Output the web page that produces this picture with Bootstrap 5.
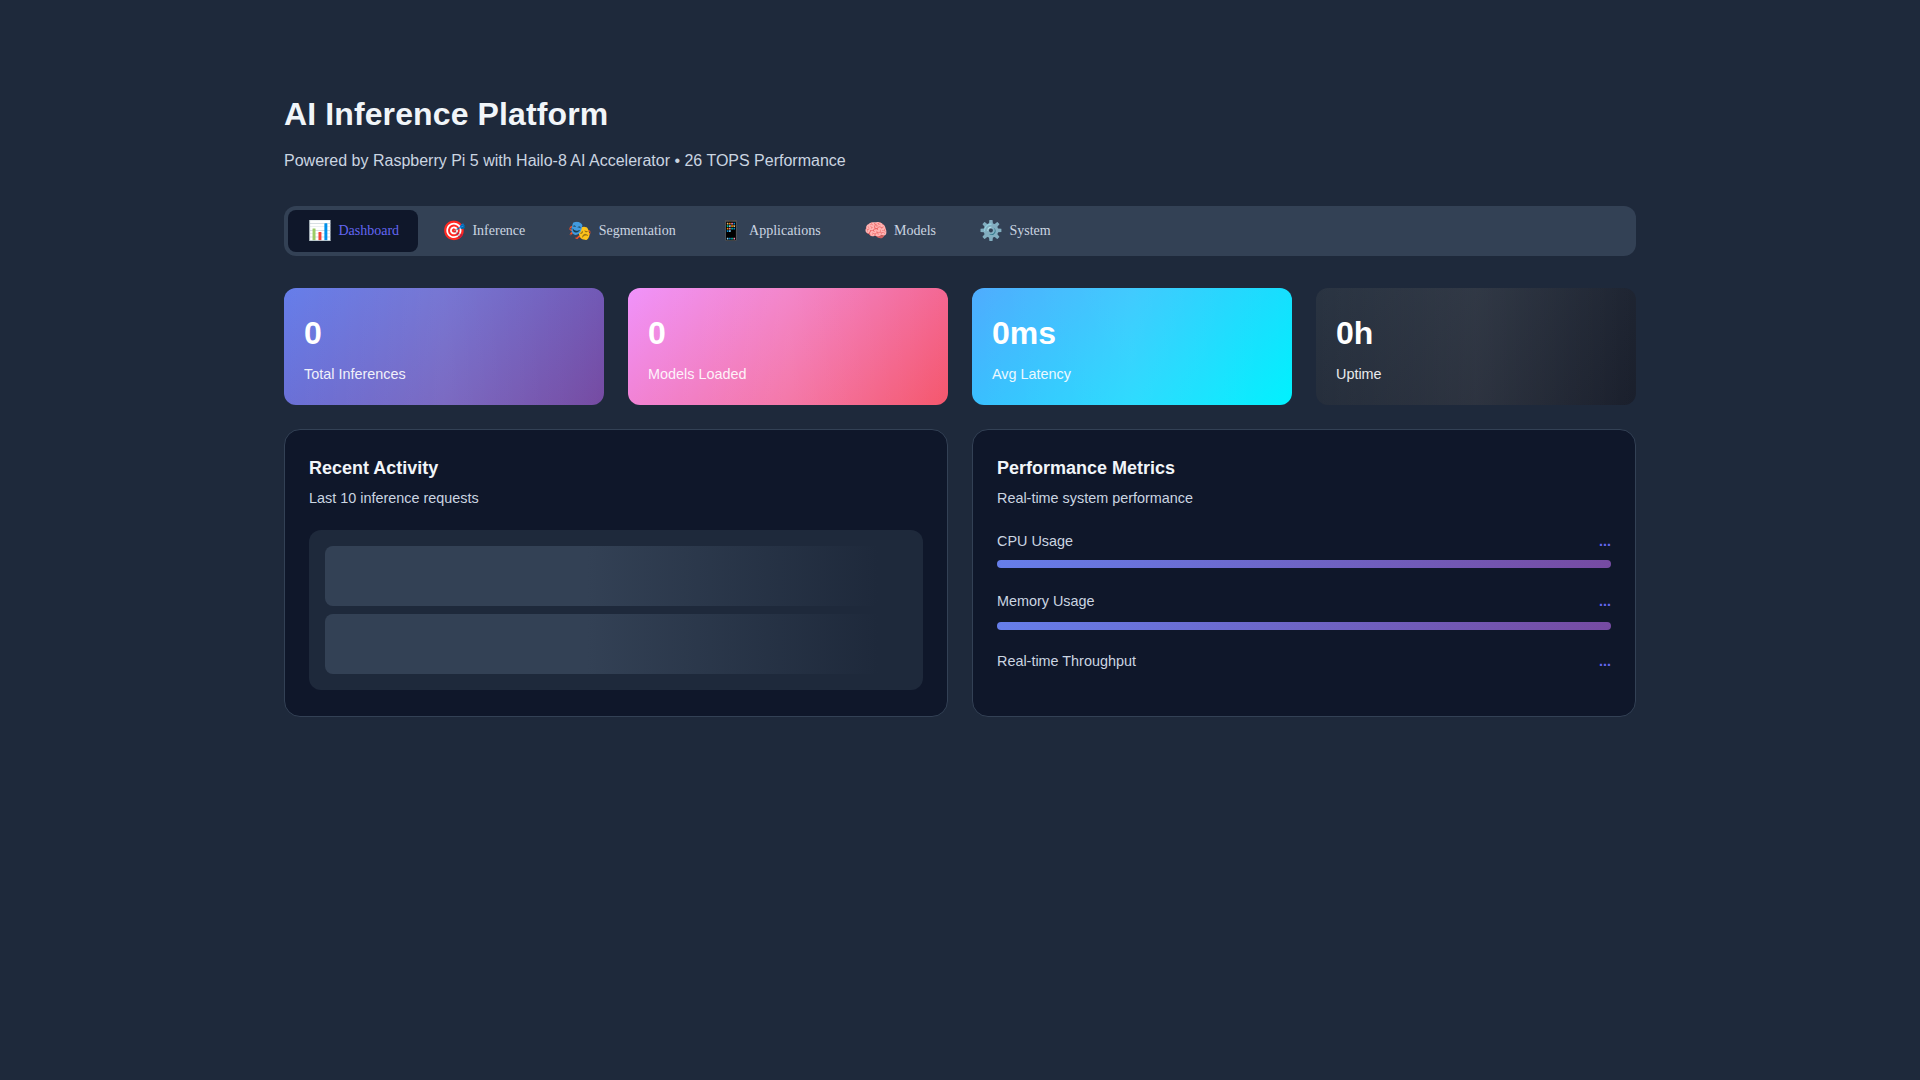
<!DOCTYPE html>
<html lang="en">
<head>
<meta charset="utf-8">
<title>AI Inference Platform</title>
<link href="https://cdn.jsdelivr.net/npm/bootstrap@5.3.0/dist/css/bootstrap.min.css" rel="stylesheet">
<style>
body{background:#1e293b;font-family:"Liberation Sans",Arial,sans-serif;line-height:1.6;color:#f1f5f9;min-height:1080px}
.shell{max-width:1400px;margin:0 auto;padding:89px 24px 24px}
.page-title{font-size:32px;font-weight:700;line-height:1.6;letter-spacing:.12px;color:#f1f5f9;margin:0 0 8px}
.page-sub{font-size:16px;line-height:1.6;color:#cbd5e1;margin:0 0 32px}
.tabbar{background:#334155;border-radius:12px;padding:4px;margin-bottom:32px;height:50px}
.tabbtn{display:flex;align-items:center;gap:6.4px;height:42px;padding:0 19px 0 20px;border:0;background:transparent;border-radius:8px;color:#cbd5e1;font-family:"Liberation Serif",serif;font-size:14px}
.tabbtn.on{background:#0f172a;color:#6366f1}
.tabemoji{font-size:19.2px;line-height:1}
.stats{display:grid;grid-template-columns:repeat(4,1fr);gap:24px;margin-bottom:24px}
.statbox{height:117px;border-radius:12px;padding:20px;color:#fff}
.statval{font-size:32px;font-weight:700;line-height:1.6;margin-bottom:4px}
.statlbl{font-size:14.4px;line-height:1.6;opacity:.9}
.g1{background:linear-gradient(90deg,transparent,rgba(255,255,255,.08),transparent),linear-gradient(135deg,#667eea,#764ba2)}
.g2{background:linear-gradient(90deg,transparent,rgba(255,255,255,.08),transparent),linear-gradient(135deg,#f093fb,#f5576c)}
.g3{background:linear-gradient(90deg,transparent,rgba(255,255,255,.08),transparent),linear-gradient(135deg,#4facfe,#00f2fe)}
.g4{background:linear-gradient(90deg,transparent,rgba(255,255,255,.06),transparent),linear-gradient(135deg,#2a3442,#1a1f2c)}
.panels{display:grid;grid-template-columns:repeat(2,1fr);gap:24px}
.panelbox{background:#0f172a;border:1px solid #334155;border-radius:16px;padding:24px;height:288px}
.ptitle{font-size:18px;font-weight:700;line-height:1.6;color:#f1f5f9;margin:0 0 4px}
.psub{font-size:14.4px;line-height:1.6;color:#cbd5e1;margin:0 0 20px}
.skelwrap{background:#1e293b;border-radius:12px;padding:16px}
.skel{height:60px;border-radius:8px;background:linear-gradient(90deg,#334155 45%,#1e293b 95%);margin-bottom:8px}
.skel:last-child{margin-bottom:0}
.mrow{display:flex;justify-content:space-between;align-items:center;height:23px;font-size:14.4px;color:#cbd5e1}
.mdots{color:#6366f1;font-size:14.4px;font-weight:600;margin-top:1px}
.mbar{height:8px;border-radius:4px;background:linear-gradient(90deg,#667eea,#764ba2)}
.mbar-a{margin:7px 0 22px}
.mbar-b{margin:9px 0 20px}
</style>
</head>
<body>
<div class="shell">
  <h1 class="page-title">AI Inference Platform</h1>
  <p class="page-sub">Powered by Raspberry Pi 5 with Hailo-8 AI Accelerator • 26 TOPS Performance</p>
  <nav class="tabbar d-flex gap-1">
    <button class="tabbtn on"><span class="tabemoji">📊</span>Dashboard</button>
    <button class="tabbtn"><span class="tabemoji">🎯</span>Inference</button>
    <button class="tabbtn"><span class="tabemoji">🎭</span>Segmentation</button>
    <button class="tabbtn"><span class="tabemoji">📱</span>Applications</button>
    <button class="tabbtn"><span class="tabemoji">🧠</span>Models</button>
    <button class="tabbtn"><span class="tabemoji">⚙️</span>System</button>
  </nav>
  <section class="stats">
    <div class="statbox g1"><div class="statval">0</div><div class="statlbl">Total Inferences</div></div>
    <div class="statbox g2"><div class="statval">0</div><div class="statlbl">Models Loaded</div></div>
    <div class="statbox g3"><div class="statval">0ms</div><div class="statlbl">Avg Latency</div></div>
    <div class="statbox g4"><div class="statval">0h</div><div class="statlbl">Uptime</div></div>
  </section>
  <section class="panels">
    <div class="panelbox">
      <h3 class="ptitle">Recent Activity</h3>
      <p class="psub">Last 10 inference requests</p>
      <div class="skelwrap"><div class="skel"></div><div class="skel"></div></div>
    </div>
    <div class="panelbox">
      <h3 class="ptitle">Performance Metrics</h3>
      <p class="psub">Real-time system performance</p>
      <div class="mrow"><span>CPU Usage</span><span class="mdots">...</span></div>
      <div class="mbar mbar-a"></div>
      <div class="mrow"><span>Memory Usage</span><span class="mdots">...</span></div>
      <div class="mbar mbar-b"></div>
      <div class="mrow"><span>Real-time Throughput</span><span class="mdots">...</span></div>
    </div>
  </section>
</div>
<script src="https://cdn.jsdelivr.net/npm/bootstrap@5.3.0/dist/js/bootstrap.bundle.min.js"></script>
</body>
</html>
